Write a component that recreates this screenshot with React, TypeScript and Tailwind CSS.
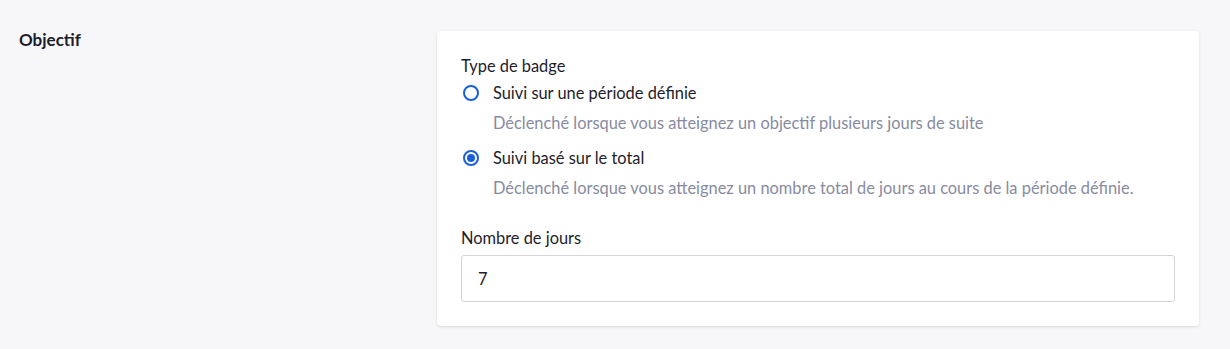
import { useState } from "react";

const options = [
  {
    id: "period",
    label: "Suivi sur une période définie",
    hint: "Déclenché lorsque vous atteignez un objectif plusieurs jours de suite",
  },
  {
    id: "total",
    label: "Suivi basé sur le total",
    hint: "Déclenché lorsque vous atteignez un nombre total de jours au cours de la période définie.",
  },
];

export default function App() {
  const [type, setType] = useState("total");
  const [days, setDays] = useState("7");

  return (
    <div
      className="min-h-[349px] bg-[#f7f7f9] text-[16.4px] text-[#1d1d2b]"
      style={{ fontFamily: "Lato, 'Noto Sans', sans-serif" }}
    >
      <div className="flex pt-[31px] pl-[19px]">
        <div className="w-[418px] shrink-0 -mt-[2px] text-[17px] font-bold leading-[22px]">Objectif</div>
        <div className="w-[762px] rounded-[4px] bg-white px-6 pt-[24px] pb-[24px] shadow-[0_1px_3px_rgba(0,0,0,0.12)]">
          <div className="leading-[22px]">Type de badge</div>
          <div className="mt-[5px] flex flex-col gap-[13px]">
            {options.map((o) => (
              <label key={o.id} className="flex cursor-pointer flex-col">
                <div className="flex items-center gap-[14px] leading-[22px]">
                  <span className="ml-[2px] flex h-4 w-4 items-center justify-center rounded-full border-2 border-[#1a5fd8]">
                    {type === o.id && <span className="h-2 w-2 rounded-full bg-[#1a5fd8]" />}
                  </span>
                  <input
                    type="radio"
                    name="badge"
                    className="hidden"
                    checked={type === o.id}
                    onChange={() => setType(o.id)}
                  />
                  <span>{o.label}</span>
                </div>
                <div className="mt-[8px] pl-[32px] leading-[22px] text-[#878ba0]">{o.hint}</div>
              </label>
            ))}
          </div>
          <div className="mt-[28px] leading-[22px]">Nombre de jours</div>
          <input
            value={days}
            onChange={(e) => setDays(e.target.value)}
            className="mt-[6px] h-[47px] w-full rounded-[3px] border border-[#d4d4d8] px-4 text-[16.4px] text-[#1d1d2b] outline-none"
          />
        </div>
      </div>
    </div>
  );
}
